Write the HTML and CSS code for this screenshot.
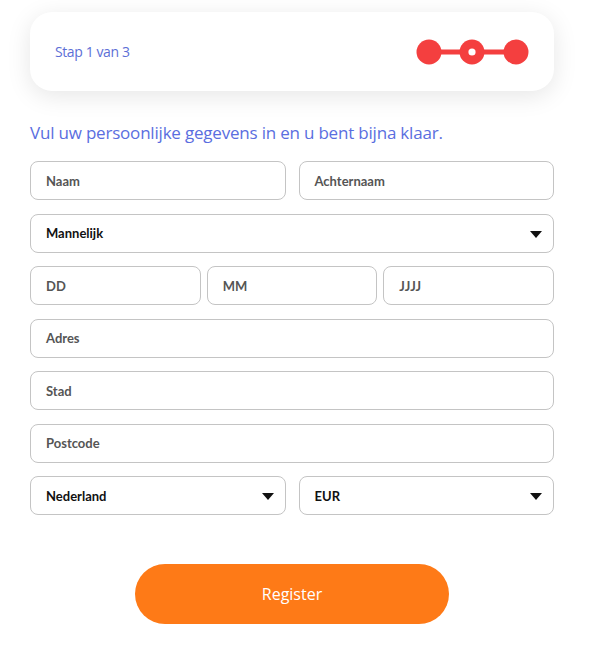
FILE: index.html
```html
<!DOCTYPE html>
<html lang="nl">
<head>
<meta charset="utf-8">
<link rel="stylesheet" href="styles.css">
</head>
<body>
<div class="page">
  <div class="card">
    <span class="step">Stap 1 van 3</span>
    <svg class="dots" width="116" height="28" viewBox="0 0 116 28">
      <line x1="13" y1="14" x2="100" y2="14" stroke="#f43f3f" stroke-width="5"/>
      <circle cx="13" cy="14" r="12.5" fill="#f43f3f"/>
      <circle cx="56" cy="14" r="12.5" fill="#f43f3f"/>
      <circle cx="56" cy="14" r="3.6" fill="#fff"/>
      <circle cx="100" cy="14" r="12.5" fill="#f43f3f"/>
    </svg>
  </div>
  <h2 class="title">Vul uw persoonlijke gegevens in en u bent bijna klaar.</h2>
  <form class="form">
    <div class="row two">
      <div class="field">Naam</div>
      <div class="field">Achternaam</div>
    </div>
    <div class="row">
      <div class="field select dark">Mannelijk<span class="arrow"></span></div>
    </div>
    <div class="row three">
      <div class="field">DD</div>
      <div class="field">MM</div>
      <div class="field">JJJJ</div>
    </div>
    <div class="row"><div class="field">Adres</div></div>
    <div class="row"><div class="field">Stad</div></div>
    <div class="row"><div class="field">Postcode</div></div>
    <div class="row two">
      <div class="field select dark">Nederland<span class="arrow"></span></div>
      <div class="field select dark">EUR<span class="arrow"></span></div>
    </div>
    <div class="actions">
      <div class="btn">Register</div>
    </div>
  </form>
</div>
</body>
</html>
```
FILE: styles.css
```css
* { box-sizing: border-box; }
html, body { margin: 0; padding: 0; background: #fff; }
body { font-family: "Open Sans", "Noto Sans", sans-serif; }
.page { width: 524px; margin-left: 30px; padding-top: 12px; }
.card {
  height: 79px;
  border-radius: 22px;
  background: #fff;
  box-shadow: 0 5px 24px rgba(0,0,0,0.1);
  display: flex;
  align-items: center;
  justify-content: space-between;
  padding: 0 22px 0 25px;
}
.step { font-size: 14px; color: #5d6fd6; letter-spacing: -0.4px; }
.dots { display: block; margin-top: 1px; }
.title {
  margin: 30px 0 16px;
  font-size: 17px;
  font-weight: 400;
  color: #5a6ee0;
  line-height: 24px;
  letter-spacing: -0.2px;
}
.form { display: flex; flex-direction: column; gap: 13.5px; }
.row { display: flex; gap: 13px; }
.row.three { gap: 6px; }
.field {
  flex: 1;
  height: 39px;
  border: 1px solid #c4c4c4;
  border-radius: 8px;
  display: flex;
  align-items: center;
  padding-left: 15px;
  font-family: "Lato", "Open Sans", sans-serif;
  font-size: 13px;
  font-weight: 700;
  color: #555;
  position: relative;
}
.field.dark { color: #111; }
.arrow {
  position: absolute;
  right: 11px;
  top: 16px;
  width: 0; height: 0;
  border-left: 6px solid transparent;
  border-right: 6px solid transparent;
  border-top: 7px solid #111;
}
.actions { display: flex; justify-content: center; padding-top: 35px; }
.btn {
  width: 314px;
  height: 60px;
  border-radius: 30px;
  background: #fe7a17;
  color: #fff;
  font-size: 16px;
  font-weight: 500;
  display: flex;
  align-items: center;
  justify-content: center;
}
```
